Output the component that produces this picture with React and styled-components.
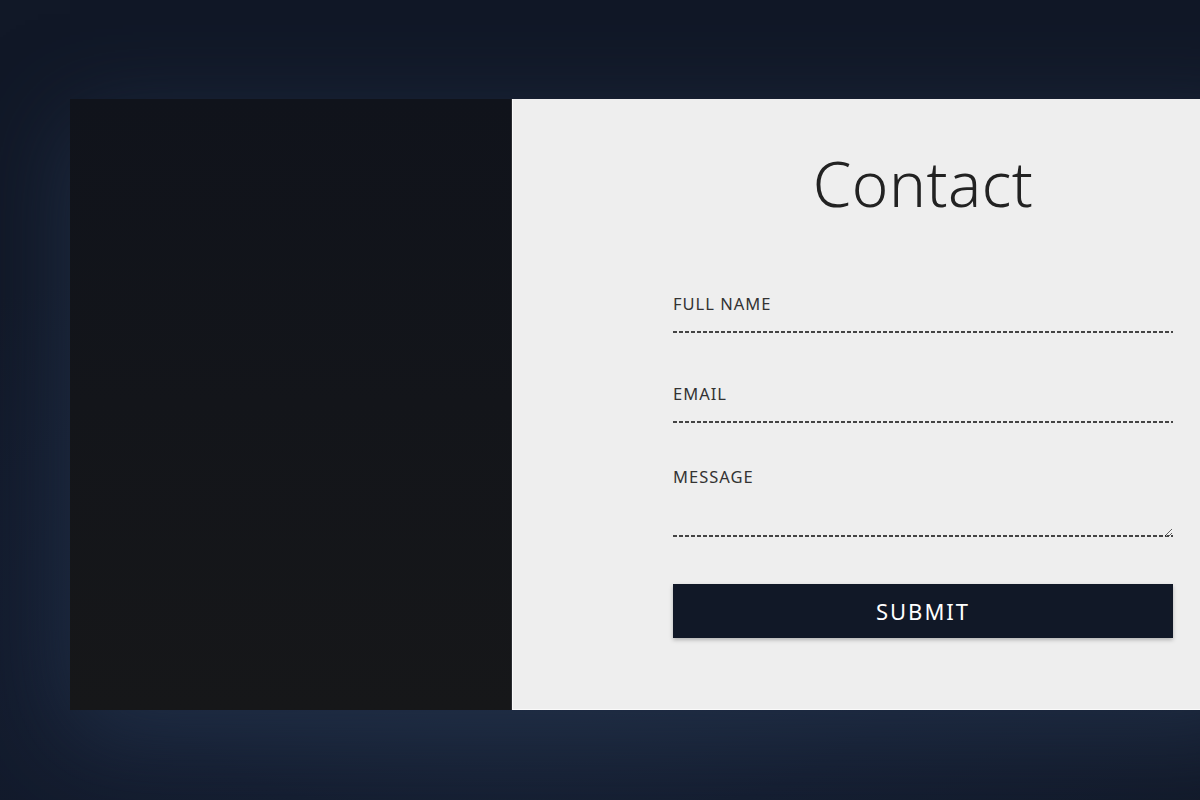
import React from "react";
import styled, { createGlobalStyle } from "styled-components";

const Global = createGlobalStyle`
  html, body { margin: 0; padding: 0; }
  body {
    width: 1200px;
    height: 800px;
    overflow: hidden;
    background: #111827;
    font-family: "Noto Sans", "Open Sans", sans-serif;
  }
  #root { height: 800px; }
`;

const Page = styled.main`
  height: 800px;
  padding: 99px 0 0 70px;
  box-sizing: border-box;
  overflow: hidden;
  background: radial-gradient(ellipse 900px 420px at 520px 640px, #1b273b 0%, #141d30 45%, #111827 100%);
`;

const Card = styled.section`
  display: flex;
  width: 1200px;
  height: 611px;
  box-shadow: 0 24px 90px rgba(36, 52, 78, 0.75);
`;

const DarkPanel = styled.div`
  width: 441px;
  flex: none;
  background: linear-gradient(180deg, #10131b 0%, #161719 100%);
  border-right: 1px solid #2b2d31;
`;

const LightPanel = styled.div`
  flex: 1;
  background: #eeeeee;
  box-shadow: inset 1px 0 0 #fafafa, inset 0 -1px 0 #fafafa;
  padding: 54px 0 0 161px;
  box-sizing: border-box;
`;

const Form = styled.form`
  width: 500px;
  display: flex;
  flex-direction: column;
`;

const Title = styled.h1`
  margin: 0;
  font-size: 62px;
  line-height: 61px;
  font-weight: 300;
  color: #222222;
  text-align: center;
  letter-spacing: 0.5px;
`;

const Field = styled.label`
  display: flex;
  flex-direction: column;
  margin-top: ${(p) => p.$top}px;
`;

const LabelText = styled.span`
  font-size: 16.5px;
  line-height: 20px;
  letter-spacing: 1px;
  color: #333333;
  text-transform: uppercase;
`;

const dashed = `
  border: none;
  outline: none;
  background-color: transparent;
  background-image: linear-gradient(to right, #444444 4px, transparent 4px);
  background-size: 6px 2px;
  background-repeat: repeat-x;
  background-position: 0 100%;
  font-family: inherit;
  font-size: 16px;
  color: #222;
  padding: 0;
  box-sizing: border-box;
  width: 100%;
`;

const Input = styled.input`
  ${dashed}
  height: 19px;
`;

const TextArea = styled.textarea`
  ${dashed}
  height: 50px;
  resize: vertical;
  display: block;
`;

const Button = styled.button`
  margin-top: 47px;
  height: 54px;
  width: 100%;
  border: none;
  background: #111827;
  color: #ffffff;
  font-family: inherit;
  font-size: 22px;
  letter-spacing: 2px;
  text-transform: uppercase;
  box-shadow: 0 2px 4px rgba(0, 0, 0, 0.25);
  cursor: pointer;
  padding: 0;
`;

export default function App() {
  return (
    <>
      <Global />
      <Page>
        <Card>
          <DarkPanel />
          <LightPanel>
            <Form onSubmit={(e) => e.preventDefault()}>
              <Title>Contact</Title>
              <Field $top={80}>
                <LabelText>Full Name</LabelText>
                <Input type="text" />
              </Field>
              <Field $top={51}>
                <LabelText>Email</LabelText>
                <Input type="email" />
              </Field>
              <Field $top={44}>
                <LabelText>Message</LabelText>
                <TextArea />
              </Field>
              <Button type="submit">Submit</Button>
            </Form>
          </LightPanel>
        </Card>
      </Page>
    </>
  );
}
